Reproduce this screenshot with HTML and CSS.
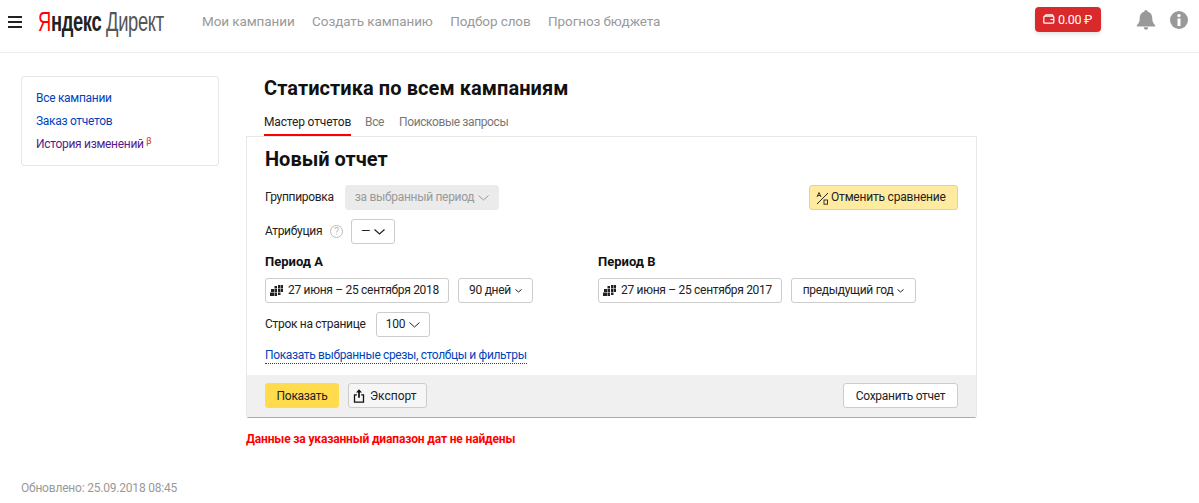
FILE: index.html
```html
<!DOCTYPE html>
<html lang="ru">
<head>
<meta charset="utf-8">
<title>Яндекс Директ</title>
<link rel="stylesheet" href="styles.css">
</head>
<body>
<header class="top">
  <div class="burger"><i></i><i></i><i></i></div>
  <div class="logo"><div class="logo-in"><span class="logo-y">Я</span><span class="logo-b">ндекс</span> <span class="logo-d">Директ</span></div></div>
  <nav class="nav">
    <a>Мои кампании</a><a>Создать кампанию</a><a>Подбор слов</a><a>Прогноз бюджета</a>
  </nav>
  <div class="top-right">
    <div class="balance">
      <svg width="12" height="10" viewBox="0 0 12 10" fill="none" stroke="#fff" stroke-width="1.2"><rect x=".8" y="2.2" width="10" height="7" rx="1"/><path d="M2 2.2 3 .8h6.500l.5 1.400"/><path d="M7.500 5.500h3.300"/></svg>
      <span>0.00 ₽</span>
    </div>
    <svg class="bell" width="20" height="20" viewBox="0 0 20 21"><path fill="#999" d="M10 0c1.100 0 1.800.8 1.800 1.800 3.200.8 4.800 3.300 4.800 6.700 0 3.600.6 5.300 3 7.500v1.200H.4V16c2.400-2.200 3-3.900 3-7.500 0-3.400 1.600-5.900 4.800-6.700C8.200.8 8.900 0 10 0zM7.700 18.200h4.600c0 1.400-1 2.500-2.300 2.500s-2.300-1.100-2.300-2.500z"/></svg>
    <svg class="info" width="18" height="18" viewBox="0 0 18 18"><circle cx="9" cy="9" r="9" fill="#999"/><circle cx="9" cy="4.600" r="1.700" fill="#fff"/><rect x="7.500" y="7.500" width="3" height="7.500" fill="#fff"/></svg>
  </div>
</header>

<div class="page">
  <aside class="side">
    <a class="side-link">Все кампании</a>
    <a class="side-link">Заказ отчетов</a>
    <a class="side-link visited">История изменений <sup class="beta">β</sup></a>
  </aside>
  <main class="main">
    <h1 class="title">Статистика по всем кампаниям</h1>
    <div class="tabs">
      <a class="tab active">Мастер отчетов</a><a class="tab">Все</a><a class="tab">Поисковые запросы</a>
    </div>
    <section class="panel">
      <div class="body">
        <h2 class="new">Новый отчет</h2>
        <div class="row row-group">
          <span class="label">Группировка</span>
          <span class="btn disabled w154">за выбранный период <svg class="chev" width="11" height="6" viewBox="0 0 11 6"><path d="M.5.500 5.500 5l5-4.500" fill="none" stroke="#999"/></svg></span>
          <span class="btn yellow">
            <svg width="13" height="14" viewBox="0 0 13 14" fill="none" stroke="#222"><path d="M1 13 12 2" stroke-width="1"/><path d="M1 6l2-4.500L5 6M1.800 4.500h2.400" stroke-width=".9"/><rect x="8" y="9" width="3.500" height="4.200" stroke-width=".9"/></svg>
            Отменить сравнение
          </span>
        </div>
        <div class="row row-attr">
          <span class="label">Атрибуция</span>
          <svg class="help" width="13" height="13" viewBox="0 0 13 13"><circle cx="6.500" cy="6.500" r="6" fill="none" stroke="#bbb"/><text x="6.500" y="10" class="help-q">?</text></svg>
          <span class="btn w44">— <svg class="chev" width="11" height="6" viewBox="0 0 11 6"><path d="M.5.500 5.500 5l5-4.500" fill="none" stroke="#222" stroke-width="1.200"/></svg></span>
        </div>
        <div class="periods">
          <div class="period">
            <h3 class="ptitle">Период А</h3>
            <div class="pline">
              <span class="btn date"><svg width="13" height="11" viewBox="0 0 13 11" fill="#222"><path d="M4.500 1h2.500v2.500H4.500zM8 0h2.500v3.500H8zM11 0h2v3.500h-2zM1 4h3v3H1zM4.500 4H7v3H4.500zM8 4h2.500v3H8zM11 4h2v3h-2zM0 7.500h4V11H0zM4.500 7.500H7V11H4.500zM8 7.500h2.500V10H8z"/></svg> 27 июня – 25 сентября 2018</span>
              <span class="btn w75">90 дней <svg width="7" height="4" viewBox="0 0 7 4"><path d="M.5.500 3.500 3l3-2.500" fill="none" stroke="#222"/></svg></span>
            </div>
          </div>
          <div class="period">
            <h3 class="ptitle">Период В</h3>
            <div class="pline">
              <span class="btn date"><svg width="13" height="11" viewBox="0 0 13 11" fill="#222"><path d="M4.500 1h2.500v2.500H4.500zM8 0h2.500v3.500H8zM11 0h2v3.500h-2zM1 4h3v3H1zM4.500 4H7v3H4.500zM8 4h2.500v3H8zM11 4h2v3h-2zM0 7.500h4V11H0zM4.500 7.500H7V11H4.500zM8 7.500h2.500V10H8z"/></svg> 27 июня – 25 сентября 2017</span>
              <span class="btn w125">предыдущий год <svg width="7" height="4" viewBox="0 0 7 4"><path d="M.5.500 3.500 3l3-2.500" fill="none" stroke="#222"/></svg></span>
            </div>
          </div>
        </div>
        <div class="row row-rows">
          <span class="label">Строк на странице</span>
          <span class="btn w54">100 <svg class="chev" width="11" height="6" viewBox="0 0 11 6"><path d="M.5.500 5.500 5l5-4.500" fill="none" stroke="#222"/></svg></span>
        </div>
        <a class="more">Показать выбранные срезы, столбцы и фильтры</a>
      </div>
      <footer class="foot">
        <span class="btn show">Показать</span>
        <span class="btn export">
          <svg width="12" height="14" viewBox="0 0 14 16"><path fill="#111" d="M7 0l3.500 4H8v6H6V4H3.500zM1 6h3.500v1.500h-2v7h9v-7h-2V6H13v10H1z"/></svg>
          Экспорт
        </span>
        <span class="btn save">Сохранить отчет</span>
      </footer>
    </section>
    <p class="error">Данные за указанный диапазон дат не найдены</p>
  </main>
</div>
<p class="updated">Обновлено: 25.09.2018 08:45</p>
</body>
</html>
```
FILE: styles.css
```css
* { box-sizing: border-box; }
html, body { margin: 0; height: 100%; }
body {
  font-family: Roboto, "Open Sans", "Liberation Sans", sans-serif;
  font-size: 12px;
  letter-spacing: -.3px;
  color: #222;
  background: #fff;
  overflow: hidden;
}
h1, h2, h3, p { margin: 0; letter-spacing: 0; }

.top {
  display: flex;
  align-items: center;
  height: 53px;
  border-bottom: 1px solid #ececec;
  padding-left: 8px;
}
.burger { display: flex; flex-direction: column; gap: 3px; width: 14px; margin: -8px 16px 0 0; }
.burger i { display: block; height: 2px; background: #222; }
.logo { width: 126px; margin-top: -8px; }
.logo-in {
  width: 190px;
  font-family: "Liberation Sans", sans-serif;
  font-size: 27px;
  line-height: 30px;
  letter-spacing: -.5px;
  white-space: nowrap;
  transform: scaleX(.68);
  transform-origin: left center;
}
.logo-y { color: #f00; }
.logo-b { color: #222; font-weight: 700; }
.logo-d { color: #555; }
.nav { display: flex; gap: 17.500px; margin-left: 38px; margin-top: -10px; font-size: 13.500px; letter-spacing: -.1px; color: #999; }
.top-right { display: flex; align-items: center; margin-left: auto; margin-top: -14px; padding-right: 11px; }
.balance {
  display: flex;
  align-items: center;
  gap: 3px;
  width: 66px;
  height: 25px;
  padding-left: 8px;
  background: #d9292b;
  border-radius: 4px;
  box-shadow: 0 2px 4px rgba(0,0,0,.12);
  color: #fff;
  font-size: 12.500px;
}
.bell { margin: 2px 0 0 35px; }
.info { margin: 2px 0 0 14px; }

.page { display: flex; padding: 23px 0 0 21px; }
.side {
  display: flex;
  flex-direction: column;
  width: 198px;
  height: 90px;
  padding: 10px 14px 0;
  border: 1px solid #e6e6e6;
  border-radius: 3px;
  margin-right: 27px;
}
.side-link { line-height: 23px; color: #04b; }
.side-link.visited { color: #551a8b; }
.beta { font-size: 9px; line-height: 0; color: #d22; vertical-align: 4px; }

.main { width: 731px; }
.title { font-size: 20px; line-height: 24px; font-weight: 700; letter-spacing: .07px; color: #111; margin: 0 0 0 18px; }
.tabs { display: flex; margin: 10px 0 0 18px; height: 26px; }
.tab { line-height: 25px; margin-right: 15px; letter-spacing: -.4px; color: #777; border-bottom: 2px solid transparent; height: 26px; }
.tab.active { margin-right: 14px; color: #222; border-color: #f00; letter-spacing: -.15px; }

.panel {
  height: 282px;
  border: 1px solid #e8e8e8;
  border-bottom: 1px solid #aaa;
  border-radius: 0 0 3px 3px;
  display: flex;
  flex-direction: column;
}
.body { flex: 1; padding: 0 18px; }
.new { font-size: 20px; line-height: 24px; font-weight: 700; color: #111; margin-top: 10px; }
.row { display: flex; align-items: center; }
.row-group { margin-top: 14px; }
.row-attr { margin-top: 9px; }
.row-rows { margin-top: 9px; }
.label { white-space: nowrap; padding-bottom: 2px; }
.row-group .label { width: 80px; }
.row-attr .label { width: 65px; }
.row-rows .label { width: 103px; }
.help { margin-right: 8px; }
.help-q { font-size: 10px; fill: #bbb; text-anchor: middle; font-family: Roboto, sans-serif; }

.btn {
  display: inline-flex;
  align-items: center;
  justify-content: center;
  height: 25px;
  gap: 4px;
  padding-bottom: 2px;
  border: 1px solid #ccc;
  border-radius: 3px;
  background: #fff;
  white-space: nowrap;
}
.btn svg { margin-top: 2px; }
.disabled { background: #ebebeb; border-color: #ebebeb; color: #999; }
.w154 { width: 154px; }
.w44 { width: 44px; }
.w54 { width: 54px; margin-left: 8px; }
.w75 { width: 75px; }
.w125 { width: 125px; }
.yellow { width: 149px; margin-left: auto; justify-content: flex-start; padding-left: 6px; background: #ffeba0; border-color: #e5d38d; gap: 2px; letter-spacing: -.2px; }
.date { width: 184px; justify-content: flex-start; padding-left: 4px; gap: 5px; }

.periods { display: flex; margin-top: 9px; }
.period { width: 333px; }
.ptitle { font-size: 13px; line-height: 17px; font-weight: 700; color: #111; }
.pline { display: flex; gap: 9px; margin-top: 8px; }

.more {
  display: inline-block;
  margin-top: 11px;
  line-height: 15px;
  letter-spacing: -.35px;
  color: #04b;
  border-bottom: 1px dotted #04b;
}
.foot {
  display: flex;
  align-items: center;
  height: 42px;
  padding: 0 18px 1px;
  background: #f0f0f1;
  gap: 9px;
}
.foot .btn { padding-bottom: 0; }
.foot .btn svg { margin-top: 0; }
.show { width: 74px; background: #ffdb4d; border-color: #ffdb4d; }
.foot .export { width: 79px; justify-content: flex-start; padding-left: 4px; gap: 5px; background: #f6f6f6; letter-spacing: 0; }
.save { width: 115px; margin-left: auto; }

.error { margin-top: 14px; font-size: 12px; letter-spacing: -.15px; line-height: 14px; font-weight: 700; color: #f00; }
.updated { padding: 0 0 0 21px; margin-top: 35px; font-size: 12px; letter-spacing: -.2px; line-height: 14px; color: #999; }
```
